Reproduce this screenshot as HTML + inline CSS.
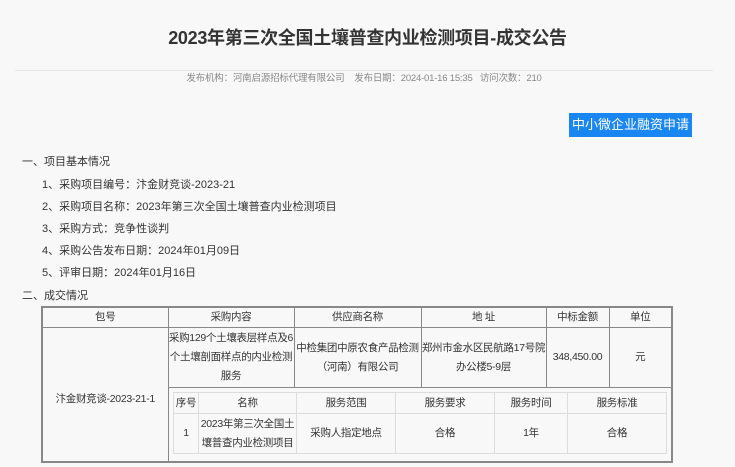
<!DOCTYPE html>
<html><head><meta charset="utf-8"><style>
*{margin:0;padding:0;box-sizing:border-box}
body{width:735px;height:467px;overflow:hidden;background:#f8f8f8;font-family:"Liberation Sans","Noto Sans CJK SC",sans-serif;color:#333;font-size:11px;position:relative}
.a{position:absolute;white-space:nowrap}
h1{position:absolute;left:0;width:735px;top:24px;text-align:center;font-size:18px;font-weight:bold;color:#333;letter-spacing:-0.3px}
.line{position:absolute;left:15px;width:698px;top:70px;border-top:1px solid #e6e6e6}
.meta{left:0;width:728px;text-align:center;top:70px;color:#888;font-size:9.5px;letter-spacing:-0.2px}
.btn{position:absolute;left:569px;top:113px;width:123px;height:24px;background:#1a86f2;color:#fff;font-size:13px;text-align:center;line-height:24px}
table{border-collapse:collapse;position:absolute;table-layout:fixed}
td{border:1px solid #888;text-align:center;font-size:10.5px;line-height:19px;padding:0;letter-spacing:-0.3px;overflow:hidden}
.in td{border:1px solid #ddd}
</style></head><body>
<h1>2023年第三次全国土壤普查内业检测项目-成交公告</h1>
<div class="line"></div>
<div class="a meta">发布机构：河南启源招标代理有限公司 &nbsp;&nbsp; 发布日期：2024-01-16 15:35 &nbsp; 访问次数：210</div>
<div class="btn">中小微企业融资申请</div>
<div class="a" style="left:22px;top:153px">一、项目基本情况</div>
<div class="a" style="left:42px;top:176px">1、采购项目编号：汴金财竞谈-2023-21</div>
<div class="a" style="left:42px;top:198px">2、采购项目名称：2023年第三次全国土壤普查内业检测项目</div>
<div class="a" style="left:42px;top:220px">3、采购方式：竞争性谈判</div>
<div class="a" style="left:42px;top:242px">4、采购公告发布日期：2024年01月09日</div>
<div class="a" style="left:42px;top:264px">5、评审日期：2024年01月16日</div>
<div class="a" style="left:22px;top:287px">二、成交情况</div>
<table style="left:41px;top:306px;width:630px;border:2px solid #888">
<colgroup><col style="width:126px"><col style="width:126px"><col style="width:127px"><col style="width:125px"><col style="width:63px"><col style="width:63px"></colgroup>
<tr style="height:20px"><td>包号</td><td>采购内容</td><td>供应商名称</td><td>地 址</td><td>中标金额</td><td>单位</td></tr>
<tr style="height:60px"><td rowspan="2" style="vertical-align:top;padding-top:62px">汴金财竞谈-2023-21-1</td><td>采购129个土壤表层样点及6个土壤剖面样点的内业检测服务</td><td>中检集团中原农食产品检测（河南）有限公司</td><td>郑州市金水区民航路17号院办公楼5-9层</td><td>348,450.00</td><td>元</td></tr>
<tr style="height:74px"><td colspan="5" style="padding:0"></td></tr>
</table>
<table class="in" style="left:173px;top:392px;width:493px">
<colgroup><col style="width:25px"><col style="width:98px"><col style="width:99px"><col style="width:99px"><col style="width:73px"><col style="width:99px"></colgroup>
<tr style="height:21px"><td>序号</td><td>名称</td><td>服务范围</td><td>服务要求</td><td>服务时间</td><td>服务标准</td></tr>
<tr style="height:40px"><td>1</td><td>2023年第三次全国土壤普查内业检测项目</td><td>采购人指定地点</td><td>合格</td><td>1年</td><td>合格</td></tr>
</table>
</body></html>
